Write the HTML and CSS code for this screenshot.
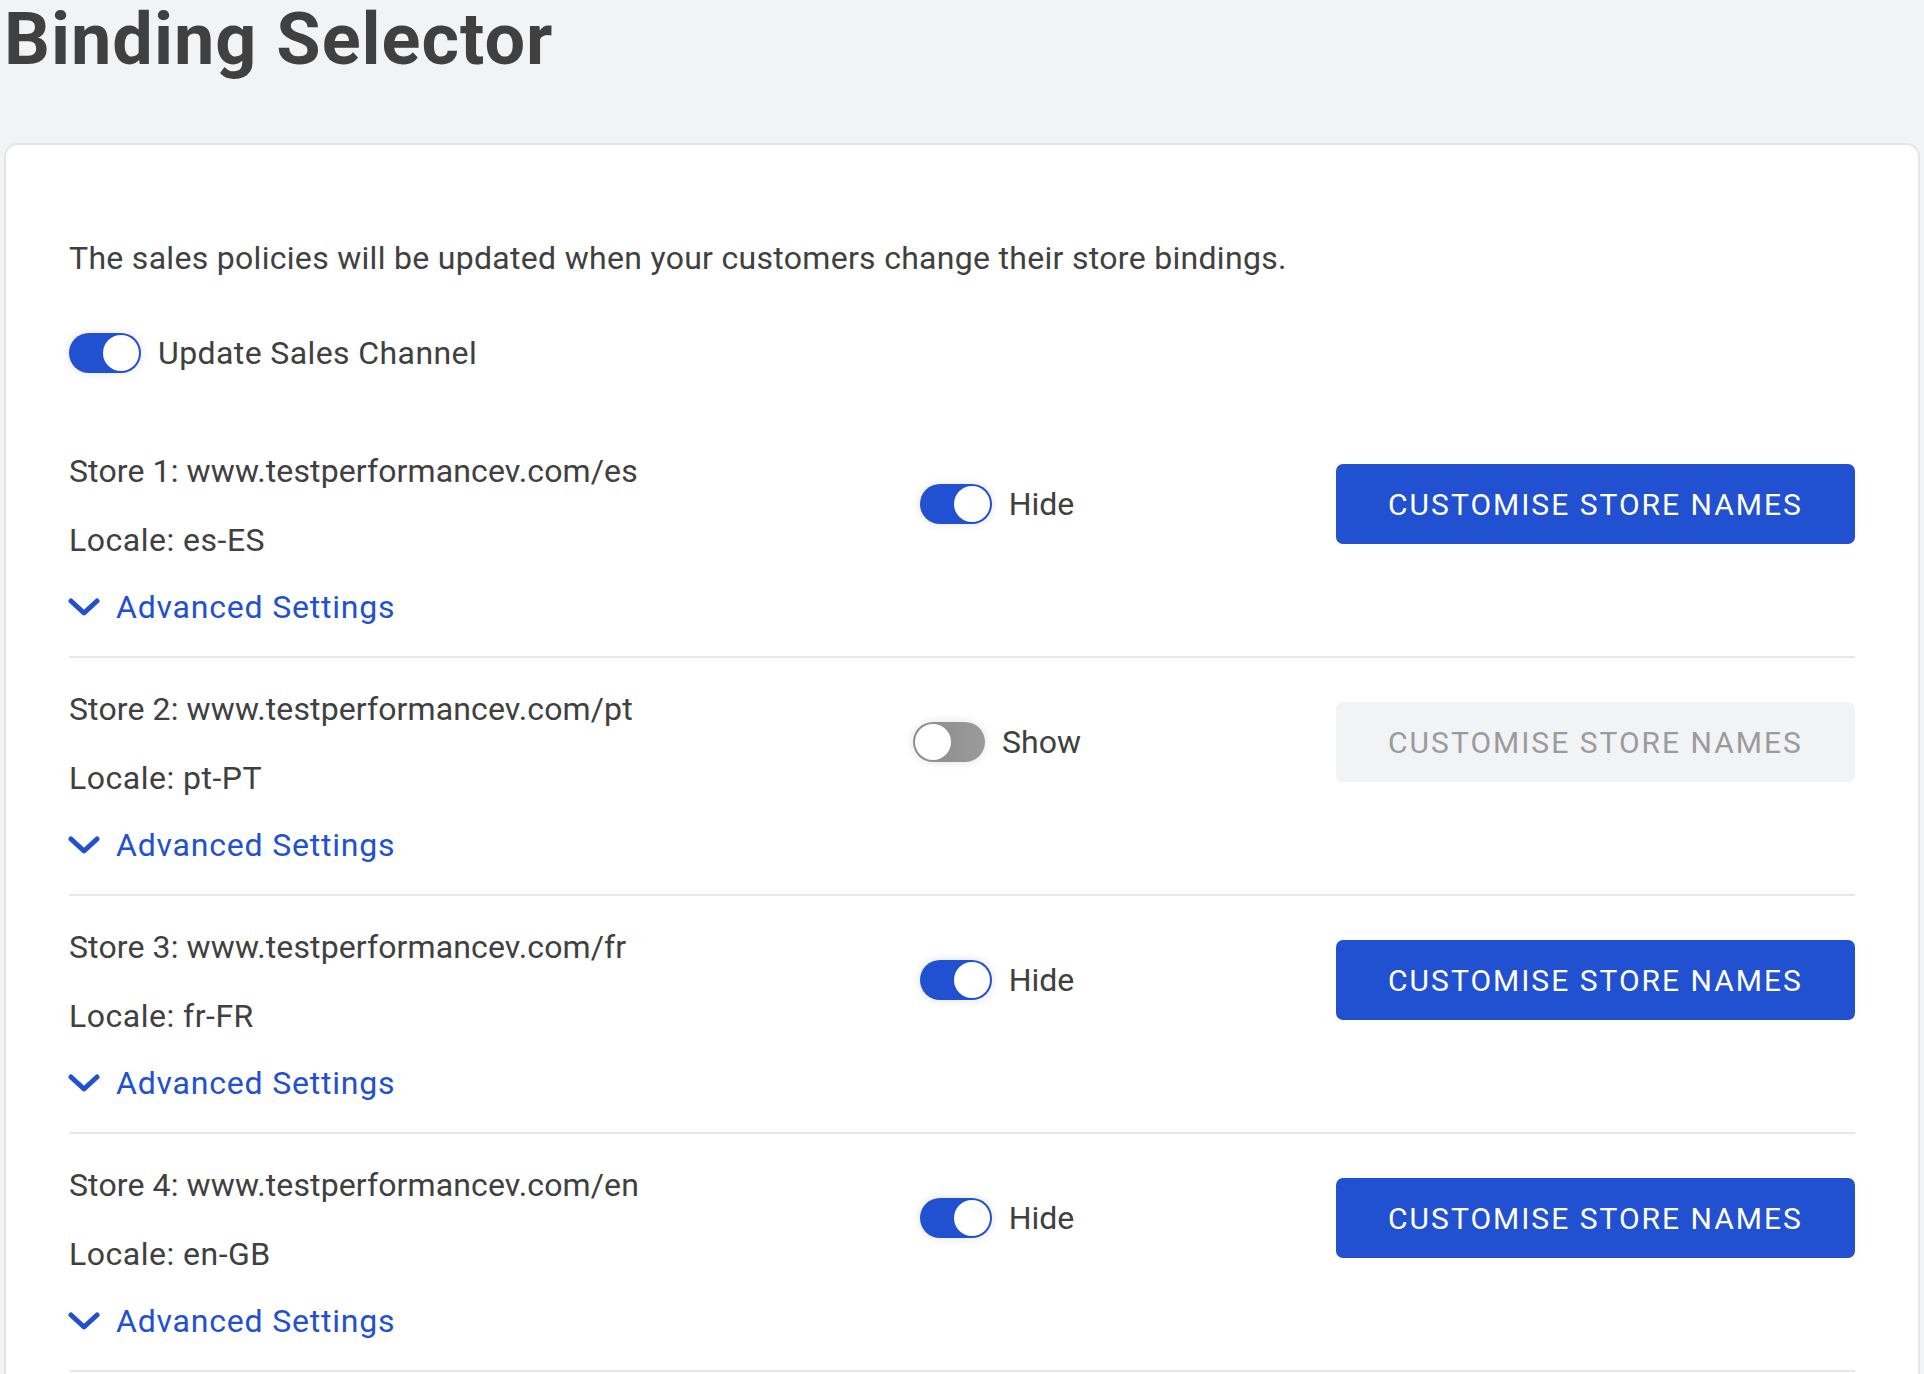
FILE: index.html
```html
<!DOCTYPE html>
<html lang="en">
<head>
<meta charset="utf-8">
<title>Binding Selector</title>
<link rel="stylesheet" href="styles.css">
</head>
<body>
<h1 class="title">Binding Selector</h1>
<section class="card">
  <p class="desc">The sales policies will be updated when your customers change their store bindings.</p>
  <div class="channel">
    <span class="switch on"><span class="knob"></span></span>
    <span class="channel-label">Update Sales Channel</span>
  </div>
  <div class="stores">
    <div class="store">
      <div class="store-main">
        <div class="store-info">
          <div class="line">Store 1: www.testperformancev.com/es</div>
          <div class="line locale">Locale: es-ES</div>
        </div>
        <div class="visibility">
          <span class="switch on"><span class="knob"></span></span>
          <span class="vis-label">Hide</span>
        </div>
        <button class="btn">CUSTOMISE STORE NAMES</button>
      </div>
      <a class="adv" href="#"><svg class="chev" viewBox="0 0 32 19" width="32" height="19"><path d="M3 3 L16 15 L29 3" fill="none" stroke="currentColor" stroke-width="5" stroke-linecap="round" stroke-linejoin="round"/></svg><span>Advanced Settings</span></a>
    </div>
    <div class="store">
      <div class="store-main">
        <div class="store-info">
          <div class="line">Store 2: www.testperformancev.com/pt</div>
          <div class="line locale">Locale: pt-PT</div>
        </div>
        <div class="visibility">
          <span class="switch off"><span class="knob"></span></span>
          <span class="vis-label">Show</span>
        </div>
        <button class="btn disabled" disabled>CUSTOMISE STORE NAMES</button>
      </div>
      <a class="adv" href="#"><svg class="chev" viewBox="0 0 32 19" width="32" height="19"><path d="M3 3 L16 15 L29 3" fill="none" stroke="currentColor" stroke-width="5" stroke-linecap="round" stroke-linejoin="round"/></svg><span>Advanced Settings</span></a>
    </div>
    <div class="store">
      <div class="store-main">
        <div class="store-info">
          <div class="line">Store 3: www.testperformancev.com/fr</div>
          <div class="line locale">Locale: fr-FR</div>
        </div>
        <div class="visibility">
          <span class="switch on"><span class="knob"></span></span>
          <span class="vis-label">Hide</span>
        </div>
        <button class="btn">CUSTOMISE STORE NAMES</button>
      </div>
      <a class="adv" href="#"><svg class="chev" viewBox="0 0 32 19" width="32" height="19"><path d="M3 3 L16 15 L29 3" fill="none" stroke="currentColor" stroke-width="5" stroke-linecap="round" stroke-linejoin="round"/></svg><span>Advanced Settings</span></a>
    </div>
    <div class="store">
      <div class="store-main">
        <div class="store-info">
          <div class="line">Store 4: www.testperformancev.com/en</div>
          <div class="line locale">Locale: en-GB</div>
        </div>
        <div class="visibility">
          <span class="switch on"><span class="knob"></span></span>
          <span class="vis-label">Hide</span>
        </div>
        <button class="btn">CUSTOMISE STORE NAMES</button>
      </div>
      <a class="adv" href="#"><svg class="chev" viewBox="0 0 32 19" width="32" height="19"><path d="M3 3 L16 15 L29 3" fill="none" stroke="currentColor" stroke-width="5" stroke-linecap="round" stroke-linejoin="round"/></svg><span>Advanced Settings</span></a>
    </div>
  </div>
</section>
</body>
</html>
```
FILE: styles.css
```css
* { box-sizing: border-box; }

html, body {
  margin: 0;
  background: #f2f3f5;
}

body {
  padding: 0 4px;
  font-family: Roboto, "Liberation Sans", sans-serif;
  color: #404040;
}

.title {
  margin: 0;
  padding-top: 4px;
  font-size: 72px;
  line-height: 72px;
  font-weight: 700;
  letter-spacing: 1px;
  color: #404040;
}

.card {
  margin-top: 67px;
  background: #fff;
  border: 2px solid #e4e5e7;
  border-radius: 14px;
  padding: 91px 63px 60px;
}

.desc {
  margin: 0;
  font-size: 32px;
  line-height: 45px;
  letter-spacing: 0.3px;
}

.channel {
  display: flex;
  align-items: center;
  gap: 17px;
  margin-top: 52px;
  height: 40px;
}

.channel-label {
  font-size: 32px;
  line-height: 40px;
  letter-spacing: 0.4px;
}

.switch {
  display: flex;
  align-items: center;
  width: 72px;
  height: 40px;
  padding: 2px;
  border-radius: 20px;
  box-shadow: 0 0 10px rgba(0, 0, 0, 0.12);
  flex: none;
}

.switch.on {
  background: #2151d1;
  justify-content: flex-end;
}

.switch.off {
  background: linear-gradient(90deg, #8c8c8c, #9a9a9a);
  justify-content: flex-start;
}

.knob {
  width: 36px;
  height: 36px;
  border-radius: 50%;
  background: #fff;
}

.stores {
  margin-top: 47px;
}

.store {
  padding: 27px 0 25px;
  border-bottom: 2px solid #e6e7e9;
}

.store-main {
  display: grid;
  grid-template-columns: 778px 300px 1fr;
  align-items: center;
}

.store-info {
  display: flex;
  flex-direction: column;
  gap: 21px;
}

.line {
  font-size: 32px;
  line-height: 48px;
  letter-spacing: 0.12px;
  white-space: nowrap;
}

.line.locale {
  letter-spacing: 0.5px;
}

.visibility {
  display: flex;
  align-items: center;
  justify-content: center;
  gap: 17px;
  margin-bottom: 3px;
}

.vis-label {
  font-size: 32px;
  line-height: 40px;
}

.btn {
  justify-self: end;
  width: 519px;
  height: 80px;
  margin-bottom: 3px;
  border: 0;
  border-radius: 7px;
  background: #2151d1;
  color: #fff;
  font-family: Roboto, "Liberation Sans", sans-serif;
  font-size: 30px;
  font-weight: 400;
  letter-spacing: 2px;
  padding: 0;
}

.btn.disabled {
  background: #f2f3f5;
  color: #9b9b9b;
}

.adv {
  display: flex;
  align-items: center;
  gap: 16px;
  margin-top: 19px;
  height: 48px;
  color: #2151d1;
  text-decoration: none;
  font-size: 32px;
  line-height: 48px;
  letter-spacing: 0.8px;
}

.chev {
  flex: none;
  margin-left: -1px;
}
```
